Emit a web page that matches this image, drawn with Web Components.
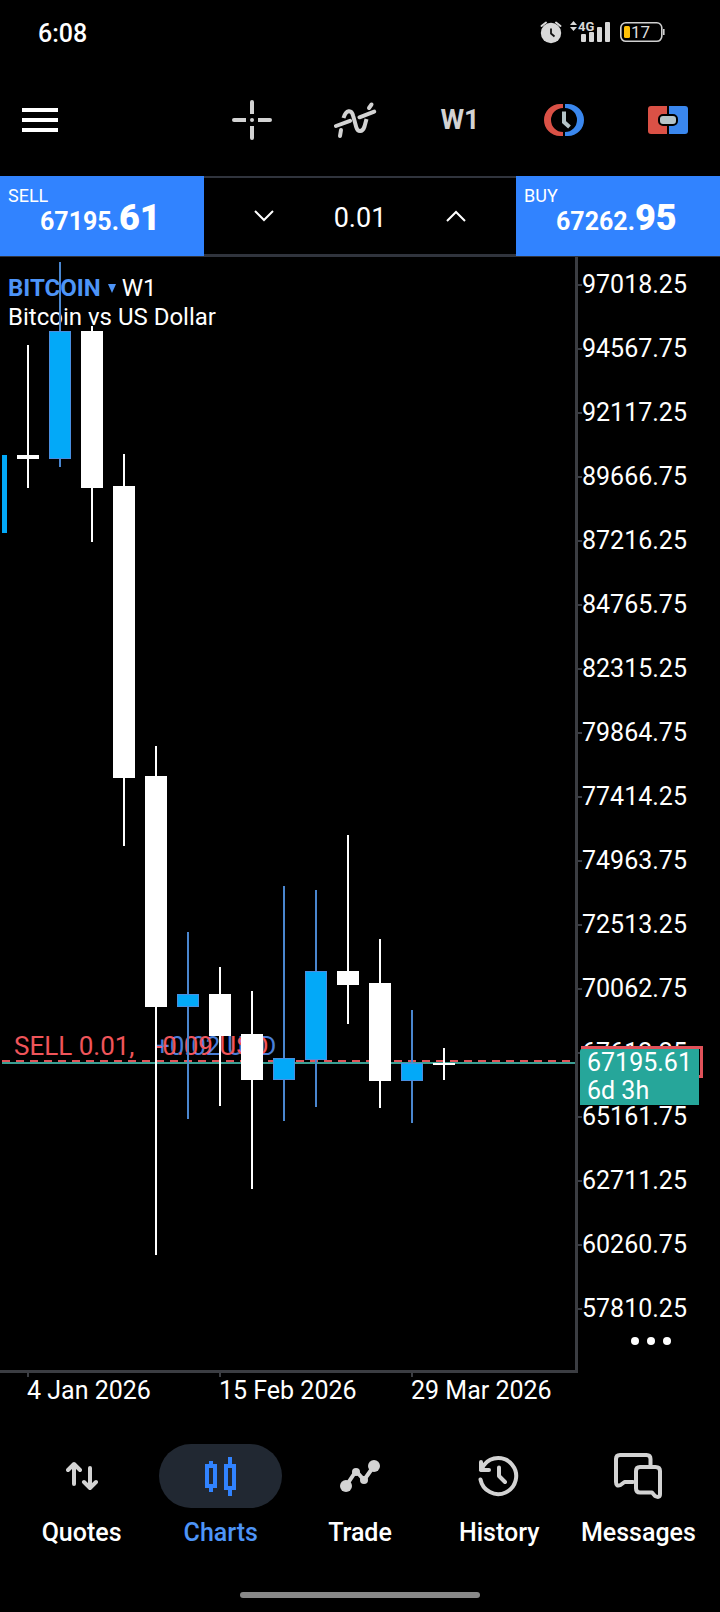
<!DOCTYPE html>
<html lang="en">
<head>
<meta charset="utf-8">
<meta name="viewport" content="width=device-width, initial-scale=1">
<title>Charts – BITCOIN W1</title>
<style>
  html, body { margin: 0; background: #000; }
  body { color: #fff; font: 400 24px/28px Roboto, "Liberation Sans", sans-serif; }
</style>
</head>
<body>
<trade-app></trade-app>
<script>
const define = (name, html, setup) => customElements.define(name, class extends HTMLElement {
  constructor() {
    super();
    const root = this.attachShadow({ mode: 'open' });
    const template = document.createElement('template');
    template.innerHTML = '<style>*{box-sizing:border-box}button{appearance:none;border:0;margin:0;padding:0;background:none;color:inherit;font:inherit;cursor:pointer}svg{display:block}</style>' + html;
    root.append(template.content.cloneNode(true));
  }
  connectedCallback() { if (setup) setup(this, this.shadowRoot); }
});

/* ---- Status bar ---- */
define('status-bar', `
<style>
  :host { display: flex; align-items: center; height: 64px; padding: 0 54px 0 38px; }
  time { flex: 1; padding-top: 3px; font-weight: 500; font-size: 25px; }
  .icons { display: flex; align-items: center; }
</style>
<time>6:08</time>
<div class="icons">
  <svg width="126" height="28" viewBox="540 18 126 28" role="img" aria-label="Alarm, 4G signal, battery 17">
    <g fill="none" stroke="#d8d8d8" stroke-width="2" stroke-linecap="round">
      <path d="M541.5 26L546 22.500M560.500 26L556 22.500"/>
    </g>
    <circle cx="551" cy="33" r="10.200" fill="#d8d8d8"/>
    <path d="M551 28.500V33.500L554.500 36.500" fill="none" stroke="#111" stroke-width="1.800"/>
    <path d="M570 25l3.500-4 3.500 4zM570 27h7l-3.500 4z" fill="#d8d8d8"/>
    <rect x="581" y="34" width="5" height="8" rx="1" fill="#d8d8d8"/>
    <rect x="589" y="32" width="5" height="10" rx="1" fill="#d8d8d8"/>
    <rect x="597" y="27" width="5" height="15" rx="1" fill="#d8d8d8"/>
    <rect x="605" y="22" width="5" height="20" rx="1" fill="#d8d8d8"/>
    <text x="578" y="31" font-size="13" font-weight="700" fill="#d8d8d8">4G</text>
    <rect x="620.800" y="22.800" width="41" height="18.500" rx="5" fill="none" stroke="#d0d0d0" stroke-width="1.600"/>
    <path d="M663.800 29v6" stroke="#d0d0d0" stroke-width="1.600"/>
    <rect x="624" y="26" width="6" height="12" rx="1.500" fill="#ffc107"/>
    <text x="631" y="38" font-size="17" fill="#ddd">17</text>
  </svg>
</div>`);

/* ---- Toolbar ---- */
define('tool-bar', `
<style>
  :host { display: flex; align-items: center; height: 112px; color: #d3d3d3; }
  button { width: 104px; height: 104px; display: grid; place-items: center; }
  .menu { width: 80px; margin-right: auto; }
  .frame { font-size: 27px; font-weight: 700; }
</style>
<button class="menu" aria-label="Menu"><svg width="36" height="24"><path d="M0 2H36M0 12H36M0 22H36" stroke="#fff" stroke-width="4"/></svg></button>
<button aria-label="Crosshair"><svg width="40" height="40" fill="none" stroke="currentColor" stroke-width="4" stroke-linecap="round"><path d="M20 2V12M20 28V38M2 20H12M28 20H38M20 20h.01"/><path d="M20 8v6M20 26v6M8 20h6M26 20h6" stroke-linecap="butt"/></svg></button>
<button aria-label="Indicators"><svg width="44" height="40" viewBox="334 100 44 40" fill="none" stroke="currentColor" stroke-width="4" stroke-linecap="round"><path d="M340 136L341 130M369 108L371.500 104.500" /><path d="M343.500 118C346 109.500 351.500 109 353.200 116L356.200 127C357.800 132.500 362.500 132.500 364.500 126.500L366.500 119" stroke-linecap="butt"/><path d="M336 126L350 120.800M359.500 117.300L374.200 111.600"/></svg></button>
<button class="frame">W1</button>
<button aria-label="Trade history levels"><svg width="40" height="32" viewBox="544 104 40 32"><path d="M563 104H560a16 16 0 0 0 0 32H563V132a12 12 0 0 1 0-24Z" fill="#da5146"/><path d="M565 104h3a16 16 0 0 1 0 32h-3v-4a12 12 0 0 0 0-24Z" fill="#3a87ee"/><path d="M564 111.500V122L569.500 127" fill="none" stroke="#b5c4c8" stroke-width="4"/></svg></button>
<button aria-label="One click trading"><svg width="40" height="28"><path d="M3 0H19V28H3a3 3 0 0 1-3-3V3a3 3 0 0 1 3-3Z" fill="#da5146"/><path d="M21 0H37a3 3 0 0 1 3 3V25a3 3 0 0 1-3 3H21Z" fill="#3a87ee"/><rect x="11" y="9" width="18" height="10" rx="4" fill="#b5c4c8" stroke="#000" stroke-width="2"/></svg></button>`);

/* ---- One-click trading ---- */
define('deal-button', `
<style>
  :host { display: block; }
  button { display: flex; flex-direction: column; justify-content: flex-start; width: 100%; height: 80px; padding: 10px 0 0 8px; background: #3183ff; color: #fff; text-align: left; }
  .side { font-size: 18px; line-height: 20px; }
  .price { margin: -8px 0 0 32px; font-size: 25px; font-weight: 700; line-height: 40px; white-space: nowrap; }
  .price b { font-size: 36px; }
</style>
<button><span class="side"><slot></slot></span><span class="price"><slot name="whole"></slot><b><slot name="cents"></slot></b></span></button>`);

define('trade-bar', `
<style>
  :host { display: grid; grid-template-columns: 204px 1fr 204px; height: 80px; }
  .volume { display: grid; grid-template-columns: 120px 1fr 120px; align-items: center; border: solid #30343d; border-width: 2px 0; }
  button { height: 72px; display: grid; place-items: center; }
  input { width: 100%; min-width: 0; padding: 3px 0 0; border: 0; background: none; color: #fff; font: inherit; font-size: 27px; text-align: center; outline: 0; }
</style>
<deal-button>SELL<span slot="whole">67195.</span><span slot="cents">61</span></deal-button>
<div class="volume">
  <button aria-label="Decrease volume"><svg width="20" height="12" fill="none" stroke="#fff" stroke-width="2"><path d="M1 1L10 10L19 1"/></svg></button>
  <input aria-label="Volume" value="0.01">
  <button aria-label="Increase volume"><svg width="20" height="12" fill="none" stroke="#fff" stroke-width="2"><path d="M1 11L10 2L19 11"/></svg></button>
</div>
<deal-button>BUY<span slot="whole">67262.</span><span slot="cents">95</span></deal-button>`);

/* ---- Candles: centre x, high, low, body top, body bottom, rising ---- */
const CANDLES = [
  [28, 345, 488, 455, 459, 0], [60, 262, 467, 331, 459, 1], [92, 326, 542, 331, 488, 0],
  [124, 454, 846, 486, 778, 0], [156, 746, 1255, 776, 1007, 0], [188, 932, 1119, 994, 1007, 1],
  [220, 967, 1106, 994, 1036, 0], [252, 991, 1189, 1034, 1080, 0], [284, 886, 1121, 1058, 1080, 1],
  [316, 890, 1107, 971, 1060, 1], [348, 835, 1024, 971, 985, 0], [380, 939, 1108, 983, 1081, 0],
  [412, 1010, 1123, 1063, 1081, 1], [444, 1048, 1080, 1063, 1065, 0]
];
const TOP = 257;

define('candle-series', `
<style>:host { display: block; } svg { width: 100%; height: 100%; }</style>
<svg role="img" aria-label="BITCOIN weekly candles"></svg>`, (host, root) => {
  const rect = (x, y, w, h, fill) => `<rect x="${x}" y="${y - TOP}" width="${w}" height="${h}" fill="${fill}"/>`;
  root.querySelector('svg').innerHTML = rect(2, 455, 5, 78, '#03a9f8') + CANDLES.map(([x, hi, lo, a, b, up]) =>
    rect(x - 1, hi, 2, lo - hi, up ? '#4a86cf' : '#fff') +
    rect(x - 11, a, 22, b - a, up ? '#4a8fe0' : '#fff') + (up ? rect(x - 10, a + 1, 20, b - a - 2, '#03a9f8') : '')).join('');
});

define('price-scale', `
<style>
  :host { display: block; position: relative; padding-top: 16px; }
  ol { list-style: none; margin: 0; padding: 0; display: grid; gap: 40px; }
  li { display: flex; align-items: center; line-height: 24px; font-size: 25px; }
  li::before { content: ""; width: 4px; height: 2px; background: #3a3d44; }
  .order { position: absolute; top: 789px; left: 3px; width: 122px; height: 32px; border: 3px solid #e0525a; }
  .last { position: absolute; top: 792px; left: 2px; width: 119px; height: 56px; padding-left: 7px; border-radius: 2px 0 0 0; background: #26a69a; font-size: 25px; }
  button { width: 100%; height: 40px; padding-left: 3px; display: grid; place-items: center; }
</style>
<ol></ol>
<button aria-label="More"><svg width="40" height="8" fill="#fff"><circle cx="4" cy="4" r="4"/><circle cx="20" cy="4" r="4"/><circle cx="36" cy="4" r="4"/></svg></button>
<div class="order"></div>
<div class="last">67195.61<br>6d 3h</div>`, (host, root) => {
  root.querySelector('ol').innerHTML = Array.from({ length: 17 }, (_, i) =>
    `<li>${(97018.25 - i * 2450.5).toFixed(2)}</li>`).join('');
});

define('price-chart', `
<style>
  :host { display: grid; grid-template-columns: 1fr 142px; grid-template-rows: 1fr 71px; border-top: 1px solid #30343d; }
  .plot { position: relative; border: solid #3b3d42; border-width: 0 3px 3px 0; overflow: hidden; min-width: 0; }
  candle-series { position: absolute; inset: 0; }
  .title { padding: 16px 0 0 8px; }
  .symbol { display: flex; align-items: center; height: 30px; }
  .symbol button { display: flex; align-items: center; gap: 7px; color: #4d94f7; font-weight: 700; }
  .symbol span { margin-left: 6px; }
  .name { margin: 0; font-size: 24px; line-height: 28px; }
  .order, .profit { position: absolute; top: 775px; color: #f0555a; font-size: 26px; white-space: pre; }
  .order { left: 14px; }
  .profit { left: 155px; }
  .profit.buy { color: #4a7fd8; }
  .level { position: absolute; left: 2px; right: 0; top: 803px; height: 4px; border-bottom: 2px solid #3a9f93;
    background: repeating-linear-gradient(90deg, #e0555a 0 8px, transparent 8px 14px) 0 0 / 100% 2px no-repeat; }
  .dates { grid-column: 1 / -1; display: grid; grid-template-columns: repeat(3, 192px); padding-left: 27px; align-content: start; font-size: 25px; }
  .dates time { white-space: nowrap; line-height: 28px; }
  .dates time::before { content: ""; display: block; width: 2px; height: 4px; background: #3b3d42; }
</style>
<div class="plot">
  <div class="title">
    <div class="symbol"><button>BITCOIN<svg width="8" height="9" fill="currentColor"><path d="M0 0H8L4 9Z"/></svg></button><span>W1</span></div>
    <p class="name">Bitcoin vs US Dollar</p>
  </div>
  <span class="order">SELL 0.01,</span>
  <span class="profit buy">+0.02 USD</span>
  <span class="profit">-0.09 USD</span>
  <div class="level"></div>
  <candle-series></candle-series>
</div>
<price-scale></price-scale>
<div class="dates"><time>4 Jan 2026</time><time>15 Feb 2026</time><time>29 Mar 2026</time></div>`);

/* ---- Bottom navigation ---- */
define('nav-item', `
<style>
  :host { display: block; min-width: 0; color: #fff; }
  a { display: flex; flex-direction: column; align-items: center; gap: 11px; color: inherit; text-decoration: none; font-size: 25px; font-weight: 500; line-height: 28px; }
  .icon { display: grid; place-items: center; width: 123px; height: 64px; border-radius: 32px; color: #d3d3d3; }
  :host([active]) { color: #4d94f7; }
  :host([active]) .icon { background: #212832; color: #3183ff; }
</style>
<a href="#"><span class="icon"><slot name="icon"></slot></span><slot></slot></a>`);

define('bottom-nav', `
<style>
  :host { display: grid; grid-template-columns: repeat(5, 1fr); padding: 0 12px; }
  svg { fill: none; stroke: currentColor; stroke-width: 4; stroke-linecap: round; stroke-linejoin: round; }
</style>
<nav-item><svg slot="icon" width="32" height="32"><path d="M8 24V5M2 10L8 4L14 10M24 8V27M18 22L24 28L30 22"/></svg>Quotes</nav-item>
<nav-item active><svg slot="icon" width="32" height="40" style="stroke-linecap:butt;stroke-linejoin:miter"><path d="M2 10H10V30H2ZM6 5V10M6 30V36M21 10H29V32H21ZM25 1V10M25 32V40"/></svg>Charts</nav-item>
<nav-item><svg slot="icon" width="40" height="32"><path d="M6 26L16 11L24 20L34 6"/><g fill="currentColor" stroke="none"><circle cx="6" cy="26" r="6"/><circle cx="16" cy="12" r="4"/><circle cx="24" cy="20" r="4"/><circle cx="34" cy="6" r="6"/></g></svg>Trade</nav-item>
<nav-item><svg slot="icon" width="42" height="42" viewBox="478 1455 42 42"><path d="M480.500 1479.500A18 18 0 1 0 484 1465L481 1470M481 1462V1470H489M499 1467.500V1476L505 1482"/></svg>History</nav-item>
<nav-item><svg slot="icon" width="50" height="48" viewBox="613 1452 50 48"><path d="M650.500 1465V1459Q650.500 1455 646.500 1455H620Q616 1455 616 1459V1482Q616 1487 620.500 1485L624.500 1482H633"/><path d="M640 1467H655.500Q660 1467 660 1471V1494Q660 1498.500 655 1496L652 1492.500H640Q636 1492.500 636 1488.500V1471Q636 1467 640 1467Z"/></svg>Messages</nav-item>`);

define('trade-app', `
<style>
  :host { display: flex; flex-direction: column; min-height: 100vh; }
  price-chart { flex: 1 0 auto; }
  .handle { width: 240px; height: 6px; margin: 45px auto 14px; border-radius: 3px; background: #888; }
</style>
<status-bar></status-bar>
<tool-bar></tool-bar>
<trade-bar></trade-bar>
<price-chart></price-chart>
<bottom-nav></bottom-nav>
<div class="handle"></div>`);
</script>
</body>
</html>
